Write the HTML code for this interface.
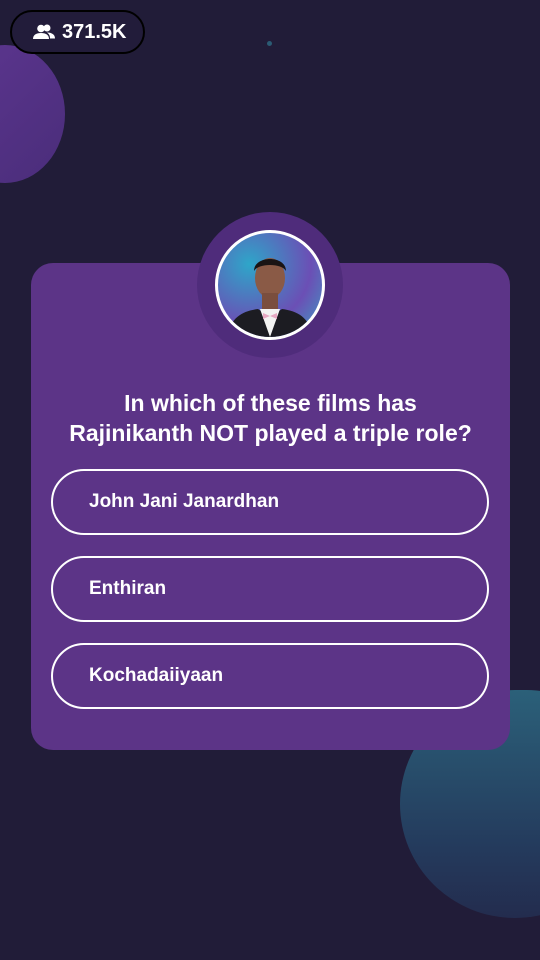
<!DOCTYPE html>
<html><head><style>
body{margin:0;width:540px;height:960px;background:#211c38;position:relative;overflow:hidden;font-family:"Liberation Sans",sans-serif}
.blob1{position:absolute;left:-55px;top:45px;width:120px;height:138px;border-radius:50%;background:linear-gradient(135deg,#5d3690,#4a2d7a)}
.blob2{position:absolute;left:400px;top:690px;width:230px;height:228px;border-radius:50% 45% 50% 50%;background:linear-gradient(180deg,#2b6079,#243a5c 70%,#232c4e)}
.pill{position:absolute;left:10px;top:10px;width:135px;height:44px;border:2px solid #000;border-radius:24px;background:#221c3a;box-sizing:border-box;color:#fff;font-weight:bold;font-size:20px;line-height:40px;padding-left:50px}
.card{position:absolute;left:31px;top:263px;width:479px;height:487px;background:#5c3487;border-radius:22px}
.ring{position:absolute;left:197px;top:212px;width:146px;height:146px;border-radius:50%;background:#4f2c7b}
.photo{position:absolute;left:215px;top:230px;width:104px;height:104px;border-radius:50%;border:3px solid #fff;overflow:hidden;background:radial-gradient(circle at 30% 30%,#2ea6c9,#6b4fb5 60%,#3aa3c4)}
.q{position:absolute;left:31px;top:388px;width:479px;text-align:center;color:#fff;font-weight:bold;font-size:23px;line-height:30px}
.opt{position:absolute;left:51px;width:438px;height:66px;box-sizing:border-box;border:2.5px solid #fff;border-radius:33px;color:#fff;font-weight:bold;font-size:19px;line-height:61px;padding-left:36px}
</style></head><body>
<div class="blob1"></div><div class="blob2"></div>
<div style="position:absolute;left:267px;top:41px;width:5px;height:5px;border-radius:50%;background:#2b5b74"></div>
<div class="pill"><svg style="position:absolute;left:21px;top:12px" width="22" height="16" viewBox="0 0 22 16"><circle cx="8" cy="4.5" r="3.8" fill="#fff"/><path d="M0 15c0-4 3-6 8-6s8 2 8 6z" fill="#fff"/><circle cx="14" cy="4" r="3.5" fill="#fff"/><path d="M14 8.5c4 0 8 1.5 8 6h-5c0-3-1-4.5-3-6z" fill="#fff"/></svg>371.5K</div>
<div class="card"></div>
<div class="ring"></div>
<div class="photo"><svg width="104" height="104" viewBox="0 0 104 104"><path d="M10 104c2-20 15-26 30-28l12 8 12-8c15 2 28 8 30 28z" fill="#1c1c22"/><path d="M42 76l10 28 10-28z" fill="#f3f3f3"/><path d="M45 80l7 3 7-3v6l-7-3-7 3z" fill="#e7a9c4"/><ellipse cx="52" cy="45" rx="15" ry="20" fill="#8a5a46"/><path d="M36 38c0-16 32-16 32 0-4-8-28-8-32 0z" fill="#1a1414"/><rect x="44" y="60" width="16" height="16" fill="#7a4e3e"/></svg></div>
<div class="q">In which of these films has<br>Rajinikanth NOT played a triple role?</div>
<div class="opt" style="top:469px">John Jani Janardhan</div>
<div class="opt" style="top:556px">Enthiran</div>
<div class="opt" style="top:643px">Kochadaiiyaan</div>
</body></html>
